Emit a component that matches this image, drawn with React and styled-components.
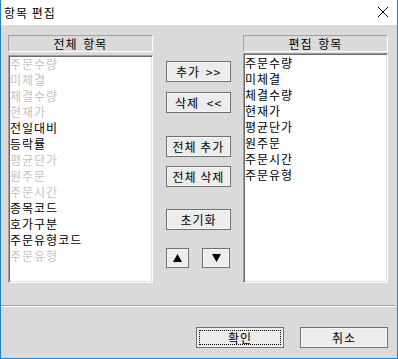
import React from "react";
import styled, { createGlobalStyle } from "styled-components";

const Global = createGlobalStyle`
  html, body { margin: 0; padding: 0; background: #ffffff; }
  body { font-family: "Noto Sans CJK KR", "Noto Sans", sans-serif; font-size: 12px; }
  * { box-sizing: border-box; }
`;

const Window = styled.div`
  width: 398px;
  height: 359px;
  border: 1px solid #1883d7;
  border-top: none;
  display: flex;
  flex-direction: column;
  background: #dadada;
`;

const TitleBar = styled.div`
  height: 25px;
  flex: none;
  background: #ffffff;
  display: flex;
  align-items: center;
  justify-content: space-between;
  padding: 0 8px 1px 3px;
  font-size: 12px;
  letter-spacing: 1px;
  color: #000;
`;

const Body = styled.div`
  flex: 1;
  display: flex;
  flex-direction: column;
`;

const MainRow = styled.div`
  display: flex;
  padding: 10px 0 0 7px;
`;

const Panel = styled.div`
  width: 145px;
  display: flex;
  flex-direction: column;
  gap: ${(p) => p.$gap}px;
  margin-left: ${(p) => p.$ml || 0}px;
`;

const Header = styled.div`
  height: 17px;
  border: 1px solid;
  border-color: #a0a0a0 #ffffff #ffffff #a0a0a0;
  display: flex;
  align-items: center;
  justify-content: center;
  font-size: 12px;
  letter-spacing: 1px;
  line-height: 1;
  color: #000;
  word-spacing: 2px;
`;

const ListBox = styled.div`
  height: ${(p) => p.$h}px;
  background: #ffffff;
  border: 1px solid;
  border-color: #a0a0a0 #ffffff #ffffff #a0a0a0;
  box-shadow: inset 1px 1px 0 #696969, inset -1px -1px 0 #e3e3e3;
  overflow: hidden;
  padding: 1px;
`;

const ItemList = styled.div`
  margin-top: ${(p) => p.$mt}px;
  display: flex;
  flex-direction: column;
`;

const Item = styled.div`
  height: 16px;
  line-height: 16px;
  font-size: 12px;
  letter-spacing: 1px;
  white-space: nowrap;
  color: ${(p) => (p.$off ? "#c3c3c3" : "#000000")};
`;

const MiddleCol = styled.div`
  width: 65px;
  margin-left: 13px;
  display: flex;
  flex-direction: column;
`;

const Button = styled.button`
  font-family: "Noto Sans CJK KR", "Noto Sans", sans-serif;
  font-size: 12px;
  letter-spacing: 1px;
  color: #000;
  height: ${(p) => p.$h || 21}px;
  width: ${(p) => (p.$w ? `${p.$w}px` : "100%")};
  margin-top: ${(p) => p.$mt || 0}px;
  padding: 0;
  background: #ececec;
  border: 1px solid #6f6f6f;
  box-shadow: inset 0 0 0 1px #f7f7f7;
  display: flex;
  align-items: center;
  justify-content: center;
  position: relative;
  line-height: 1;
  cursor: default;
  word-spacing: ${(p) => p.$ws || 0}px;
  white-space: nowrap;
`;

const Focus = styled.span`
  position: absolute;
  inset: 2px;
  border: 1px dotted #000;
  pointer-events: none;
`;

const ArrowRow = styled.div`
  display: flex;
  justify-content: space-between;
  margin-top: 18px;
  padding-right: 1px;
`;

const Separator = styled.div`
  margin: 22px 2px 0 0;
  height: 2px;
  border-top: 1px solid #a0a0a0;
  border-bottom: 1px solid #ffffff;
`;

const Footer = styled.div`
  display: flex;
  justify-content: flex-end;
  gap: 16px;
  padding: 20px 9px 0 0;
`;

const allItems = [
  ["주문수량", true],
  ["미체결", true],
  ["체결수량", true],
  ["현재가", true],
  ["전일대비", false],
  ["등락률", false],
  ["평균단가", true],
  ["원주문", true],
  ["주문시간", true],
  ["종목코드", false],
  ["호가구분", false],
  ["주문유형코드", false],
  ["주문유형", true],
];

const editItems = ["주문수량", "미체결", "체결수량", "현재가", "평균단가", "원주문", "주문시간", "주문유형"];

const CloseIcon = () => (
  <svg width="12" height="12" viewBox="0 0 12 12">
    <path d="M1 1 L11 11 M11 1 L1 11" stroke="#000" strokeWidth="1" fill="none" />
  </svg>
);

const Tri = ({ down }) => (
  <svg width="9" height="8" viewBox="0 0 9 8">
    <polygon points={down ? "0,0 9,0 4.5,8" : "0,8 9,8 4.5,0"} fill="#000" />
  </svg>
);

export default function App() {
  return (
    <>
      <Global />
      <Window>
        <TitleBar>
          <span>항목 편집</span>
          <CloseIcon />
        </TitleBar>
        <Body>
          <MainRow>
            <Panel $gap={3}>
              <Header>전체 항목</Header>
              <ListBox $h={228}>
                <ItemList $mt={-1}>
                  {allItems.map(([t, off]) => (
                    <Item key={t} $off={off}>{t}</Item>
                  ))}
                </ItemList>
              </ListBox>
            </Panel>
            <MiddleCol>
              <Button $mt={26} $ws={2}>추가 &gt;&gt;</Button>
              <Button $mt={10} $ws={4}>삭제 &lt;&lt;</Button>
              <Button $mt={23}>전체 추가</Button>
              <Button $mt={9}>전체 삭제</Button>
              <Button $mt={22}>초기화</Button>
              <ArrowRow>
                <Button $w={23} $h={20}><Tri /></Button>
                <Button $w={28} $h={20}><Tri down /></Button>
              </ArrowRow>
            </MiddleCol>
            <Panel $gap={1} $ml={12}>
              <Header>편집 항목</Header>
              <ListBox $h={230}>
                <ItemList $mt={0}>
                  {editItems.map((t) => (
                    <Item key={t}>{t}</Item>
                  ))}
                </ItemList>
              </ListBox>
            </Panel>
          </MainRow>
          <Separator />
          <Footer>
            <Button $w={88}>확인<Focus /></Button>
            <Button $w={88}>취소</Button>
          </Footer>
        </Body>
      </Window>
    </>
  );
}
